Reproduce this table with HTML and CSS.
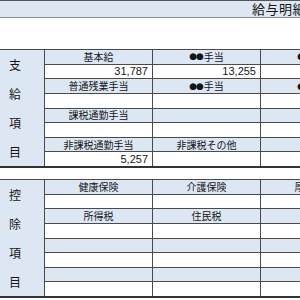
FILE: index.html
```html
<!DOCTYPE html>
<html lang="ja">
<head>
<meta charset="utf-8">
<link rel="stylesheet" href="styles.css">
</head>
<body>
<div class="page">
  <div class="band"><span class="title">給与明細書</span></div>

  <div class="section first">
    <div class="side"><span>支</span><span>給</span><span>項</span><span>目</span></div>
    <div class="c h">基本給</div><div class="c h"><span class="dots">●●</span>手当</div><div class="c h"><span class="dots">●●</span>手当</div><div class="c h"></div>
    <div class="c v">31,787</div><div class="c v">13,255</div><div class="c v"></div><div class="c v"></div>
    <div class="c h">普通残業手当</div><div class="c h"><span class="dots">●●</span>手当</div><div class="c h"><span class="dots">●●</span>手当</div><div class="c h"></div>
    <div class="c v"></div><div class="c v"></div><div class="c v"></div><div class="c v"></div>
    <div class="c h">課税通勤手当</div><div class="c h"></div><div class="c h"></div><div class="c h"></div>
    <div class="c v"></div><div class="c v"></div><div class="c v"></div><div class="c v"></div>
    <div class="c h">非課税通勤手当</div><div class="c h">非課税その他</div><div class="c h"></div><div class="c h"></div>
    <div class="c v">5,257</div><div class="c v"></div><div class="c v"></div><div class="c v"></div>
  </div>

  <div class="section second">
    <div class="side"><span>控</span><span>除</span><span>項</span><span>目</span></div>
    <div class="c h">健康保険</div><div class="c h">介護保険</div><div class="c h">厚生年金</div><div class="c h">雇用保険</div>
    <div class="c v"></div><div class="c v"></div><div class="c v"></div><div class="c v"></div>
    <div class="c h">所得税</div><div class="c h">住民税</div><div class="c h"></div><div class="c h"></div>
    <div class="c v"></div><div class="c v"></div><div class="c v"></div><div class="c v"></div>
    <div class="c h"></div><div class="c h"></div><div class="c h"></div><div class="c h"></div>
    <div class="c v"></div><div class="c v"></div><div class="c v"></div><div class="c v"></div>
    <div class="c h"></div><div class="c h"></div><div class="c h"></div><div class="c h"></div>
    <div class="c v"></div><div class="c v"></div><div class="c v"></div><div class="c v"></div>
  </div>
</div>
</body>
</html>
```
FILE: styles.css
```css
html, body {
  margin: 0;
  padding: 0;
  background: #ffffff;
  overflow: hidden;
}
body {
  width: 300px;
  height: 300px;
  font-family: "Noto Sans CJK JP", "Noto Sans", sans-serif;
  color: #151515;
}
.page {
  width: 500px;
  margin-left: -14px;
}
.band {
  height: 16px;
  background: #dde7f3;
  border-top: 1px solid #555;
  border-bottom: 1px solid #8a8f96;
  padding-left: 266px;
  display: flex;
  align-items: center;
}
.title {
  font-size: 13px;
  line-height: 16px;
  letter-spacing: 0.5px;
  white-space: nowrap;
}
.section {
  display: grid;
  grid-template-columns: 58px repeat(4, 107px);
  grid-template-rows: repeat(8, 1fr);
  gap: 1px;
  height: 116px;
  background: #4a4a4a;
  border-top: 1px solid #4a4a4a;
  border-bottom: 2px solid #333;
}
.first {
  margin-top: 31px;
}
.second {
  margin-top: 11px;
}
.side {
  grid-row: 1 / span 8;
  grid-column: 1;
  background: #dde7f3;
  display: flex;
  flex-direction: column;
  font-size: 12px;
}
.side span {
  flex: 1;
  display: flex;
  align-items: center;
  justify-content: center;
}
.c {
  display: flex;
  align-items: center;
  font-size: 10px;
  line-height: 1;
  white-space: nowrap;
  overflow: hidden;
}
.h {
  background: #dde7f3;
  justify-content: center;
}
.v {
  background: #ffffff;
  justify-content: flex-end;
  padding-right: 4px;
  font-family: "Liberation Sans", Arial, sans-serif;
  font-size: 11px;
}
.dots {
  font-family: "DejaVu Sans", sans-serif;
  font-size: 9px;
  letter-spacing: -1px;
  margin-right: 1px;
}
```
